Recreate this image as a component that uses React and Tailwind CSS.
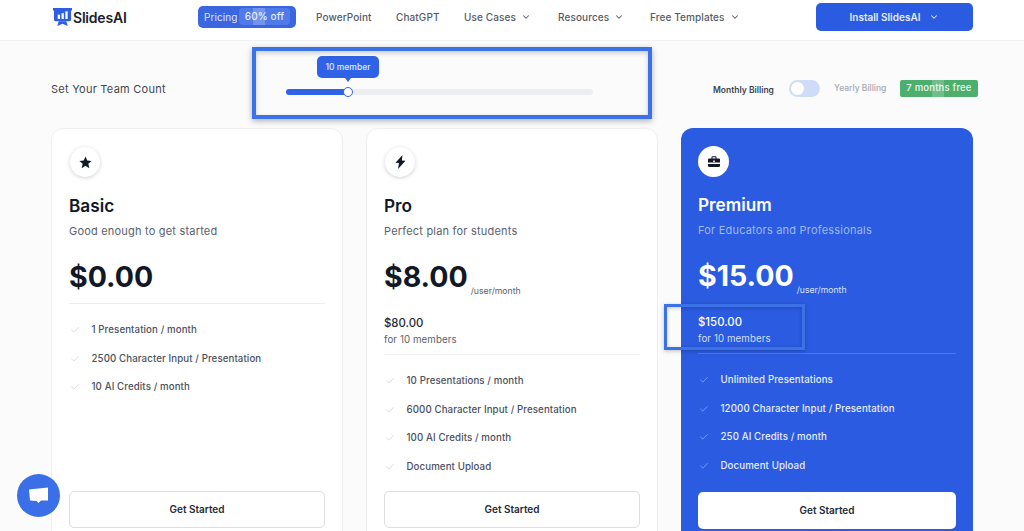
import React from 'react';
import { ChevronDown, Check } from 'lucide-react';

const navItems = [
  { label: 'Use Cases', w: 'w-[94px]' },
  { label: 'Resources', w: 'w-[92px]' },
  { label: 'Free Templates', w: 'w-[166px]' },
];

const plans = [
  {
    name: 'Basic',
    blurb: 'Good enough to get started',
    price: '$0.00',
    features: ['1 Presentation / month', '2500 Character Input / Presentation', '10 AI Credits / month'],
  },
  {
    name: 'Pro',
    blurb: 'Perfect plan for students',
    price: '$8.00',
    total: '$80.00',
    features: ['10 Presentations / month', '6000 Character Input / Presentation', '100 AI Credits / month', 'Document Upload'],
  },
  {
    name: 'Premium',
    blurb: 'For Educators and Professionals',
    price: '$15.00',
    total: '$150.00',
    dark: true,
    features: ['Unlimited Presentations', '12000 Character Input / Presentation', '250 AI Credits / month', 'Document Upload'],
  },
];

const Logo = () => (
  <svg width="19" height="19" viewBox="0 0 20 20">
    <path d="M0 0h20v2.500h-1v9.500a2 2 0 0 1-2 2H3a2 2 0 0 1-2-2V2.500H0z" fill="#2f5fe0" />
    <path d="M6 14h8l1.500 5-5.500-2.500-5.500 2.500z" fill="#2f5fe0" />
    <rect x="5" y="7" width="2.400" height="4.500" fill="#fff" />
    <rect x="9" y="5.500" width="2.400" height="6" fill="#fff" />
    <rect x="13" y="3.500" width="2.400" height="8" fill="#fff" />
  </svg>
);

const Briefcase = () => (
  <svg width="14" height="14" viewBox="0 0 14 14" fill="#111827">
    <path d="M4.500 3.500V2.200a1 1 0 0 1 1-1h3a1 1 0 0 1 1 1v1.300H12a1 1 0 0 1 1 1V7.500H1V4.500a1 1 0 0 1 1-1zm1 0h3V2.200h-3z" fillRule="evenodd" />
    <rect x="6.200" y="5.500" width="1.600" height="1.500" fill="#fff" />
    <path d="M1 9h12v1.500a1.500 1.500 0 0 1-1.500 1.500h-9A1.500 1.500 0 0 1 1 10.500z" />
  </svg>
);

const PlanIcon = ({ name }) => {
  if (name === 'Basic') {
    return (
      <svg width="13" height="13" viewBox="0 0 12 12" fill="#111827">
        <path d="M6 .5 7.600 4.200 11.600 4.600 8.600 7.200 9.500 11.200 6 9.100 2.500 11.200 3.400 7.200 .4 4.600 4.400 4.200z" />
      </svg>
    );
  }
  if (name === 'Pro') {
    return (
      <svg width="11" height="14" viewBox="0 0 11 14" fill="#111827">
        <path d="M7.500 0 .5 7.800 4 8 3 14 10.500 5.800 6.800 5.600z" />
      </svg>
    );
  }
  return <Briefcase />;
};

const PlanCard = ({ plan }) => {
  const { dark } = plan;
  return (
    <div
      className={`w-[292px] h-[420px] shrink-0 rounded-[12px] px-[17px] pt-[18px] pb-[19px] flex flex-col ${
        dark ? 'bg-[#2b5be0]' : 'bg-white border border-[#eeeff1]'
      }`}
    >
      <div
        className={`rounded-full bg-white flex items-center justify-center ${
          dark ? 'w-[31px] h-[31px]' : 'w-[30px] h-[30px] ml-px shadow-[0_1px_4px_rgba(0,0,0,0.18)]'
        }`}
      >
        <PlanIcon name={plan.name} />
      </div>
      <h2 className={`text-[17.200px] leading-[24px] font-semibold ${dark ? 'mt-[16px] text-white' : 'mt-[17px] text-[#111827]'}`}>
        {plan.name}
      </h2>
      <p className={`mt-[5px] text-[11px] leading-[16px] tracking-[0.2px] ${dark ? 'text-[#9db8f5]' : 'text-[#5b616e]'}`}>
        {plan.blurb}
      </p>
      <div className="mt-[15px] h-[46px] flex items-end">
        <span className={`text-[28.500px] leading-[46px] font-bold ${dark ? 'text-white' : 'text-[#111827]'}`}>
          {plan.price}
        </span>
        {plan.total && (
          <span className={`ml-[3px] mb-[3px] text-[8.700px] leading-[12px] ${dark ? 'text-[#dbe5fc]' : 'text-[#5b616e]'}`}>
            /user/month
          </span>
        )}
      </div>
      {plan.total && (
        <div className="mt-[14px]">
          <div className={`text-[11.400px] leading-[18px] font-medium ${dark ? 'text-white' : 'text-[#1f2937]'}`}>{plan.total}</div>
          <div className={`text-[9.700px] leading-[16px] tracking-[0.1px] ${dark ? 'text-[#d3dffb]' : 'text-[#5b616e]'}`}>
            for 10 members
          </div>
        </div>
      )}
      <div className={`h-px ${plan.total ? 'mt-[6px]' : 'mt-[3px]'} ${dark ? 'bg-[#4d77e8]' : 'bg-[#eceef0]'}`} />
      <ul className="mt-[18px] flex flex-col gap-[12.500px]">
        {plan.features.map((f) => (
          <li key={f} className="flex items-center h-[16px]">
            <Check size={10} strokeWidth={1.5} className={`ml-px ${dark ? 'text-[#a9c0f7]' : 'text-[#c3c7cd]'}`} />
            <span className={`ml-[11.500px] text-[9.700px] leading-[16px] font-medium tracking-[0.1px] ${dark ? 'text-[#e6edfd]' : 'text-[#4b5160]'}`}>
              {f}
            </span>
          </li>
        ))}
      </ul>
      <button
        className={`mt-auto w-full h-[37px] rounded-[5px] text-[10px] font-semibold text-[#1f2937] ${
          dark ? 'bg-white' : 'bg-white border border-[#dcdee2]'
        }`}
      >
        Get Started
      </button>
    </div>
  );
};

export default function App() {
  return (
    <div className="relative w-[1024px] h-[531px] overflow-hidden bg-[#fbfbfc] font-['Inter',sans-serif]">
      {/* top nav */}
      <header className="h-[41px] bg-white border-b border-[#f0f1f3] flex items-center pl-[53px] pb-[6px]">
        <div className="flex items-center gap-[1px] w-[145px]">
          <Logo />
          <span className="text-[14px] font-semibold text-[#1a202c] tracking-[-0.2px]">SlidesAI</span>
        </div>
        <div className="relative w-[98px] h-[22px] rounded-[5px] bg-[#3a66e0] flex items-center pl-[6px] text-[10px] text-[#dfe7fc] tracking-[0.1px]">
          Pricing
          <span className="absolute left-[41px] top-[2px] h-[17px] w-[51px] rounded-[4px] bg-[#4f7ae8] flex items-center justify-center font-medium text-[10px] text-[#e6edfd]">
            60% off
          </span>
          <span className="absolute left-[55px] top-[2px] h-[17px] w-[12px] bg-white/20" />
        </div>
        <span className="ml-[20px] w-[80px] text-[10px] font-medium text-[#555b66] tracking-[0.1px]">PowerPoint</span>
        <span className="w-[68px] text-[10px] font-medium text-[#555b66] tracking-[0.1px]">ChatGPT</span>
        {navItems.map((n) => (
          <span key={n.label} className={`flex items-center gap-[5px] shrink-0 whitespace-nowrap ${n.w} text-[10px] font-medium text-[#555b66] tracking-[0.1px]`}>
            {n.label}
            <ChevronDown size={10} strokeWidth={2.500} className="shrink-0" />
          </span>
        ))}
        <button className="w-[157px] h-[28px] rounded-[5px] bg-[#2b5be0] flex items-center justify-center gap-[9px] text-[10px] font-semibold text-[#e6edfd]">
          Install SlidesAI
          <ChevronDown size={10} strokeWidth={2.500} />
        </button>
      </header>

      {/* team count and billing row */}
      <div className="h-[87px] flex items-center pl-[51px] pt-[8px]">
        <span className="w-[235px] text-[11px] tracking-[0.25px] text-[#414650] translate-y-[1px]">Set Your Team Count</span>
        <div className="relative w-[307px] h-[6px] rounded-full bg-[#eceef1] translate-y-[3px]">
          <div className="w-[62px] h-[6px] rounded-full bg-[#2f62e6]" />
          <div className="absolute left-[57px] top-[-2px] w-[10px] h-[10px] rounded-full bg-white border border-[#2f62e6]" />
          <div className="absolute left-[31px] top-[-33px] w-[62px] h-[22px] rounded-[5px] bg-[#2f62e6] flex items-center justify-center pt-px text-[8.500px] font-medium text-[#e6edfd]">
            10 member
            <div className="absolute left-[28px] bottom-[-4px] border-x-[3px] border-t-[4px] border-x-transparent border-t-[#2f62e6]" />
          </div>
        </div>
        <span className="ml-[120px] w-[76px] text-[8.500px] font-semibold text-[#3f4450] whitespace-nowrap translate-y-[2px]">Monthly Billing</span>
        <div className="w-[31px] h-[17px] rounded-full bg-[#cfdcf9] relative">
          <div className="absolute left-[1px] top-[1px] w-[15px] h-[15px] rounded-full bg-white border border-[#d5d9e2]" />
        </div>
        <span className="ml-[14px] w-[66px] text-[8.500px] font-medium text-[#a4a9b3] whitespace-nowrap">Yearly Billing</span>
        <span className="relative w-[78px] h-[17px] rounded-[2px] bg-[#4caf6e] flex items-center justify-center text-[9.500px] font-medium tracking-[0.2px] text-[#eaf7ee]">
          7 months free
          <span className="absolute left-[32px] top-0 h-[17px] w-[12px] bg-white/20" />
        </span>
      </div>

      {/* plan cards */}
      <div className="flex items-start pl-[51px] gap-[23px]">
        {plans.map((p) => (
          <PlanCard key={p.name} plan={p} />
        ))}
      </div>

      {/* highlight boxes lying over the page */}
      <div className="absolute left-[252px] top-[47px] w-[400px] h-[72px] border-[4px] border-[#3b72e8] shadow-[0_2px_6px_rgba(0,0,0,0.3),inset_0_2px_5px_rgba(0,0,0,0.2)]" />
      <div className="absolute left-[664px] top-[304px] w-[141px] h-[46px] border-[3px] border-[#3b72e8] shadow-[0_1px_4px_rgba(0,0,0,0.25),inset_0_1px_4px_rgba(0,0,0,0.2)]" />

      {/* chat bubble */}
      <div className="absolute left-[17px] top-[474px] w-[43px] h-[43px] rounded-full bg-[#3a6fe8] flex items-center justify-center">
        <svg width="21" height="20" viewBox="0 0 21 20" fill="#fff">
          <path d="M1 3.500 20 1.500V14.500H13L10.500 17 8.500 15 2 14.500z" />
        </svg>
      </div>
    </div>
  );
}
